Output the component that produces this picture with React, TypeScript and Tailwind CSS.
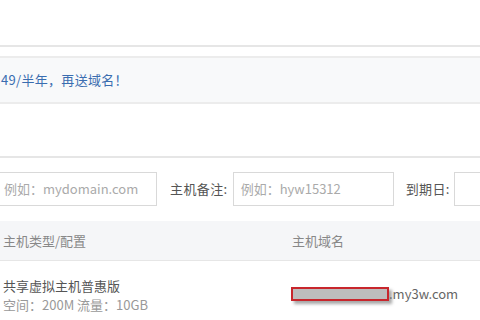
export default function App() {
  return (
    <div
      className="h-[320px] w-[480px] overflow-hidden whitespace-nowrap bg-white text-[13px] text-[#555]"
      style={{ fontFamily: '"Microsoft YaHei", "Noto Sans CJK SC", "Noto Sans", sans-serif' }}
    >
      <div className="h-[45px]" />
      <div className="h-[2px] bg-[#e6e6e6]" />
      <div className="h-[9px]" />
      {/* promo banner */}
      <div className="flex h-[48px] items-center border-y-2 border-[#ececec] bg-[#f8f9fa]">
        <span className="pl-[1px] tracking-[0.3px] text-[#3a6db0]">49/半年，再送域名！</span>
      </div>
      <div className="h-[52px]" />
      <div className="h-[2px] bg-[#e6e6e6]" />

      {/* filters */}
      <div className="mt-[14px] flex h-[34px] items-center">
        <div className="-ml-[5px] flex h-full w-[162px] shrink-0 items-center border border-[#d9d9d9] pl-[8px] text-[#aaa]">
          例如：mydomain.com
        </div>
        <span className="ml-[13px] shrink-0 tracking-[0.4px] text-[#555]">主机备注:</span>
        <div className="ml-[5px] flex h-full w-[161px] shrink-0 items-center border border-[#d9d9d9] pl-[7px] text-[#aaa]">
          例如：hyw15312
        </div>
        <span className="ml-[12px] shrink-0 tracking-[0.4px] text-[#555]">到期日:</span>
        <div className="ml-[4px] h-full w-[60px] shrink-0 border border-[#d9d9d9]" />
      </div>

      {/* table */}
      <div className="mt-[15px] flex h-[40px] items-center border-b border-[#e6e6e6] bg-[#f5f6f8] text-[#888]">
        <span className="w-[292px] shrink-0 pl-[3px]">主机类型/配置</span>
        <span>主机域名</span>
      </div>
      <div className="flex items-start pt-[15px]">
        <div className="w-[291px] shrink-0 pl-[3px] leading-[19px]">
          <div className="text-[#555]">共享虚拟主机普惠版</div>
          <div className="text-[#999]">空间：200M 流量：10GB</div>
        </div>
        <div className="mt-[8px] flex items-center">
          <span className="h-[14px] w-[98px] shrink-0 border-2 border-[#c8262c] bg-[#bdbdbd] shadow-[3px_3px_3px_rgba(0,0,0,0.35)]" />
          <span className="text-[#666]">.my3w.com</span>
        </div>
      </div>
    </div>
  );
}
